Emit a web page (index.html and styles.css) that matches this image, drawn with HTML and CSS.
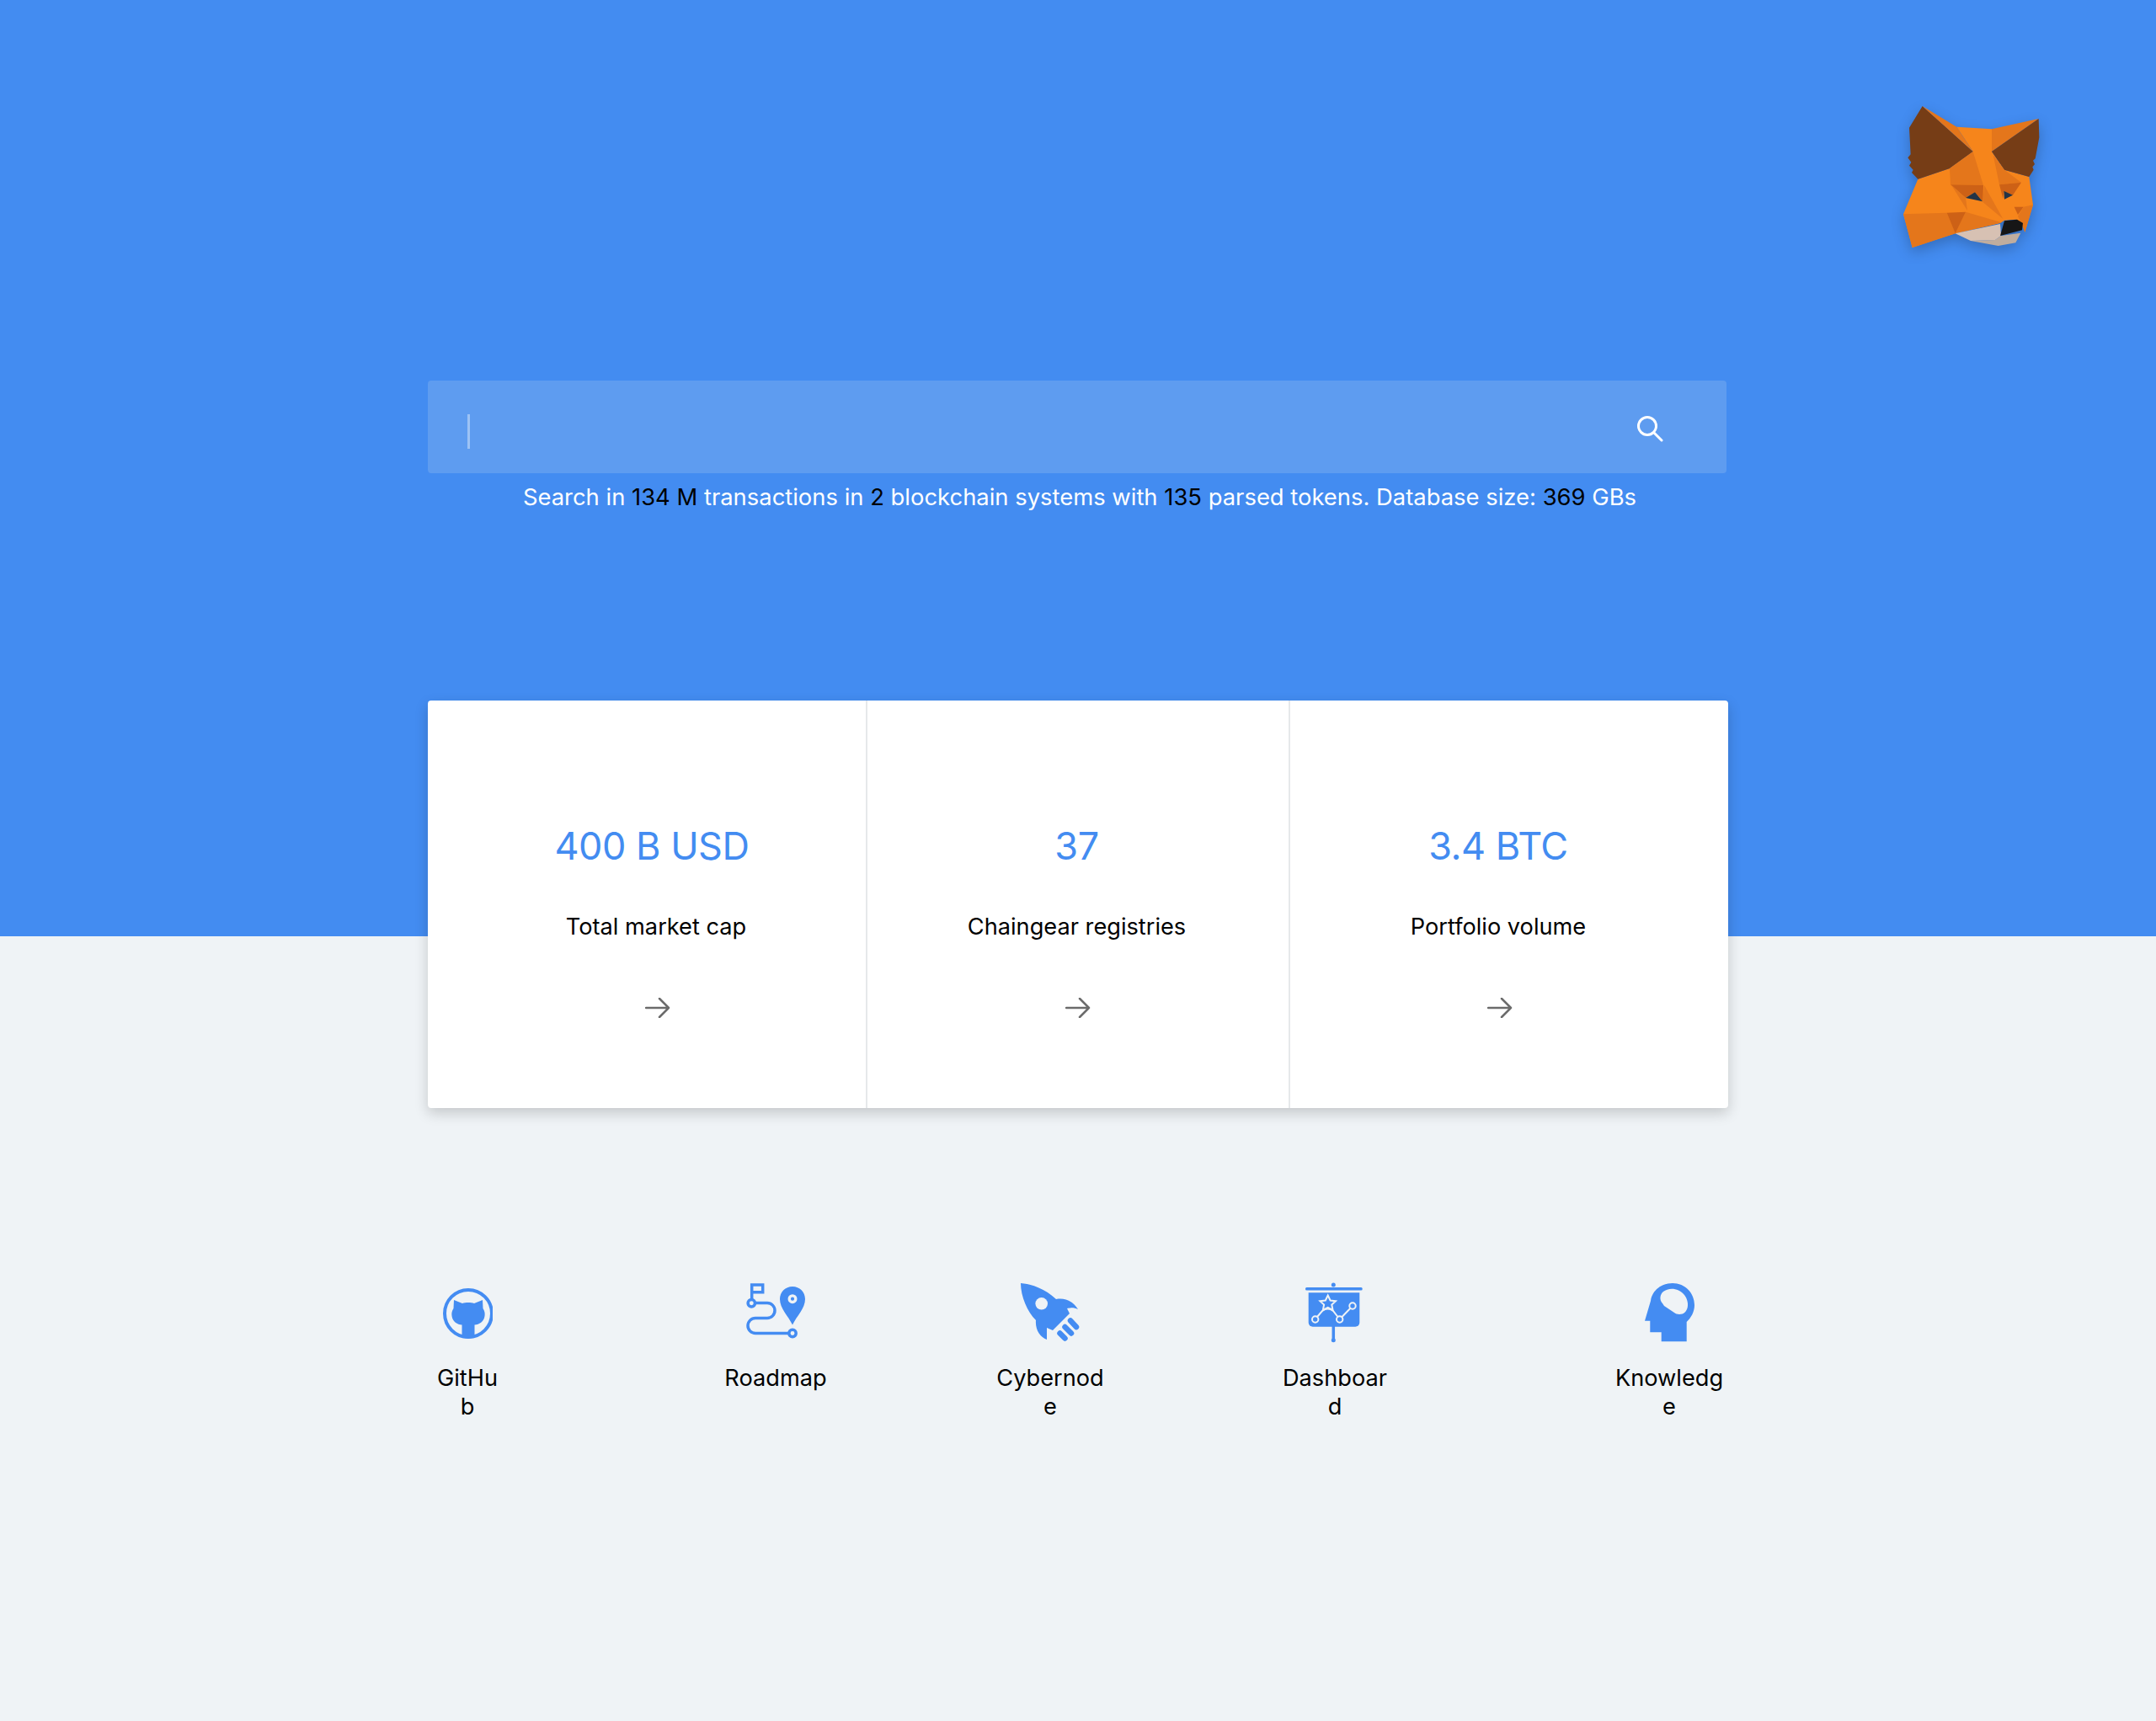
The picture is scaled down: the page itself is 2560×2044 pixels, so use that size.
FILE: index.html
```html
<!DOCTYPE html>
<html lang="en">
<head>
  <meta charset="UTF-8" />
  <meta name="viewport" content="width=device-width, initial-scale=1.0" />
  <title>Cyber Search</title>
  <link rel="stylesheet" href="styles.css">
</head>
<body>
  <section class="hero">
    <div class="hero-top">
      <svg class="fox" viewBox="0 0 720 660">
        <polygon fill="#F6851B" points="172,338 285,300 368,240 310,152 435,160 435,240 480,305 568,330 582,430 553,527 546,495 520,482 480,485 465,495 305,532 152,582 120,463"/>
        <polygon fill="#763D16" points="188,78 368,240 285,300 172,338 150,315 155,305 141,290 148,278 136,262 146,250 141,155"/>
        <polygon fill="#E4761B" points="188,78 310,152 368,240"/>
        <polygon fill="#E4761B" points="435,160 602,123 435,240"/>
        <polygon fill="#763D16" points="602,123 604,190 590,265 582,272 588,285 580,295 584,305 568,330 480,305 435,240"/>
        <polygon fill="#E4761B" points="285,300 368,240 405,360 288,358"/>
        <polygon fill="#E4761B" points="440,252 480,305 540,350 462,358"/>
        <polygon fill="#CD6116" points="288,358 405,360 403,418 375,385 342,405"/>
        <polygon fill="#E4761B" points="290,358 342,405 348,450"/>
        <polygon fill="#E4761B" points="408,360 475,480 403,420"/>
        <polygon fill="#233447" points="375,385 402,418 342,405"/>
        <polygon fill="#CD6116" points="462,358 540,350 510,395 478,380 475,408"/>
        <polygon fill="#233447" points="478,380 510,395 480,410"/>
        <polygon fill="#CD6116" points="515,437 548,437 528,465"/>
        <polygon fill="#E4761B" points="582,430 553,527 528,470 548,437"/>
        <polygon fill="#E4761B" points="342,455 470,493 305,532"/>
        <polygon fill="#E4761B" points="120,463 275,458 305,532 152,582"/>
        <polygon fill="#CD6116" points="275,458 342,455 305,532"/>
        <polygon fill="#C0AD9E" points="447,555 468,540 538,530 520,565 458,576 360,558"/>
        <polygon fill="#D7C1B3" points="305,532 465,498 468,540 447,555 360,558"/>
        <polygon fill="#161616" points="480,487 525,482 546,495 543,520 465,540"/>
      </svg>
    </div>

    <div class="search">
      <span class="search-caret"></span>
      <svg class="search-icon" viewBox="0 0 32 32">
        <circle cx="13" cy="13" r="10.5"/>
        <path d="M21 21 L30 30"/>
      </svg>
    </div>
    <p class="search-hint">Search in <b>134 M</b> transactions in <b>2</b> blockchain systems with <b>135</b> parsed tokens. Database size: <b>369</b> GBs</p>

    <div class="stats">
      <a class="stat stat-first">
        <span class="stat-value stat-value-usd">400 B USD</span>
        <span class="stat-title">Total market cap</span>
        <svg class="stat-arrow" viewBox="0 0 30 24"><path d="M1 12 H28 M17 1 L28 12 L17 23"/></svg>
      </a>
      <a class="stat stat-middle">
        <span class="stat-value">37</span>
        <span class="stat-title">Chaingear registries</span>
        <svg class="stat-arrow" viewBox="0 0 30 24"><path d="M1 12 H28 M17 1 L28 12 L17 23"/></svg>
      </a>
      <a class="stat stat-last">
        <span class="stat-value">3.4 BTC</span>
        <span class="stat-title">Portfolio volume</span>
        <svg class="stat-arrow" viewBox="0 0 30 24"><path d="M1 12 H28 M17 1 L28 12 L17 23"/></svg>
      </a>
    </div>
  </section>

  <nav class="links">
    <a class="link link-github">
      <svg class="link-icon link-icon-small" viewBox="0 0 60 90">
        <circle class="ring" cx="31" cy="50" r="28"/>
        <path class="solid" d="M14 34 L24 38 C28 36.800 34 36.800 38 38 L48 34 L48.500 44 C50.500 47 51 50 50.500 53 C49.500 60 44 63 38.500 63.500 L38.500 78 C34 80 28 80 23.500 78 L23.500 63.500 C18 63 12.500 60 11.500 53 C11 50 11.500 47 13.500 44 Z"/>
      </svg>
      <span class="link-label">GitHub</span>
    </a>
    <a class="link link-roadmap">
      <svg class="link-icon" viewBox="1 0 100 90">
        <path class="line" d="M22.700 33 V16 H35.700 V24.700 H22.700"/>
        <circle class="line" cx="22.300" cy="37.700" r="4.200"/>
        <path class="line" d="M27 37.500 H41 a9 9 0 0 1 0 18 H27 a9 9 0 0 0 0 18 H66"/>
        <circle class="line" cx="71" cy="73.500" r="4.200"/>
        <path class="solid" d="M71 63.500 C66 53 56 44 56 33 C56 24.500 62.500 18 71 18 C79.500 18 86 24.500 86 33 C86 44 76 53 71 63.500 Z"/>
        <circle class="hole-ring" cx="71" cy="32.700" r="3.800"/>
      </svg>
      <span class="link-label">Roadmap</span>
    </a>
    <a class="link link-cybernode">
      <svg class="link-icon" viewBox="-3 0 100 90">
        <path class="solid" d="M12 14 C26 15 41 21 54 33 C64 31 74 35 80 45 C76 43 71 43 67 44 L70 50 L50 70 L43 67 L43 81 C35 78 29 69 30 58 C20 48 12 30 12 14 Z"/>
        <circle class="hole" cx="36.700" cy="38.300" r="7.300"/>
        <path class="bar" d="M71 58.500 L78 66 M64.500 66 L72 73.500 M58.500 73.500 L64.500 79.500"/>
      </svg>
      <span class="link-label">Cybernode</span>
    </a>
    <a class="link link-dashboard">
      <svg class="link-icon" viewBox="-5 0 100 90">
        <circle class="solid" cx="43.300" cy="16" r="2.500"/>
        <rect class="solid" x="10" y="19" width="67.700" height="3.500" rx="1.500"/>
        <path class="solid" d="M13.700 25.300 H74.300 V60.700 A5 5 0 0 1 69.300 65.700 H18.700 A5 5 0 0 1 13.700 60.700 Z"/>
        <path class="line" d="M43.300 65 V81"/>
        <circle class="solid" cx="43.300" cy="81.700" r="2.500"/>
        <circle class="chart" cx="21.700" cy="57" r="3.700"/>
        <circle class="chart" cx="50.700" cy="57" r="3.700"/>
        <circle class="chart" cx="66" cy="41" r="3.700"/>
        <path class="chart" d="M24 54 L30 47 Q36.700 42 43 47 L48.500 54 M53.300 54.300 L63.400 43.700"/>
        <polygon class="chart" points="36.700,28.500 39.600,34.500 46,35.200 41.300,39.600 42.600,46 36.700,42.800 30.800,46 32.100,39.600 27.400,35.200 33.800,34.500"/>
      </svg>
      <span class="link-label">Dashboard</span>
    </a>
    <a class="link link-knowledge">
      <svg class="link-icon" viewBox="1 0 100 90">
        <path class="solid" d="M22 58.700 L29 35 C31 22 42 14 55 14 C70 14 81 26 81 40 C81 48 77 55 71.700 60 V83.300 H41.700 V72.300 H28.300 V58.700 Z"/>
        <path class="hole" d="M43 38 C39 34 40 27 44 24 C50 19 62 19 69 28 C76 37 74 51 63 51 C61 51 58 50 57 49 L45 41 Z"/>
      </svg>
      <span class="link-label">Knowledge</span>
    </a>
  </nav>
</body>
</html>
```

FILE: styles.css
```css
* {
  box-sizing: border-box;
}
body {
  margin: 0;
  min-height: 2044px;
  background-color: #eff3f6;
  font-family: Inter, "Noto Sans", sans-serif;
  color: #000;
}

/* Blue top block, the stats card hangs out of its bottom edge */
.hero {
  height: 1112px;
  padding-top: 100px;
  background-color: #438cf1;
}
.hero-top {
  display: flex;
  justify-content: flex-end;
  padding-right: 100px;
}
.fox {
  width: 240px;
  height: 220px;
  filter: drop-shadow(0 6px 8px rgba(0, 0, 0, 0.22));
}

.search {
  display: flex;
  align-items: center;
  justify-content: space-between;
  width: 1542px;
  height: 110px;
  margin: 132px 0 0 508px;
  padding: 0 75px 0 47px;
  border-radius: 4px;
  background-color: #5e9cf0;
}
.search-caret {
  width: 3px;
  height: 41px;
  margin-top: 11px;
  background-color: #9dc3f5;
}
.search-icon {
  width: 32px;
  height: 32px;
  margin-top: 3px;
  fill: none;
  stroke: #fff;
  stroke-width: 3;
  stroke-linecap: round;
}
.search-hint {
  margin: 10px 0 0;
  padding-left: 4px;
  font-size: 27.4px;
  line-height: 36px;
  text-align: center;
  color: #fff;
}
.search-hint b {
  font-weight: 400;
  color: #000;
}

.stats {
  display: flex;
  width: 1544px;
  height: 484px;
  margin: 224px auto 0;
  border-radius: 4px;
  background-color: #fff;
  box-shadow: 0 6px 16px rgba(0, 0, 0, 0.18);
}
.stat {
  display: flex;
  flex-direction: column;
  align-items: center;
  padding-top: 146px;
}
.stat-first {
  width: 522px;
  padding-left: 22px;
  border-right: 2px solid #e6e8ea;
}
.stat-middle {
  width: 502px;
  padding-right: 3px;
  border-right: 2px solid #e6e8ea;
}
.stat-last {
  width: 520px;
  padding-right: 26px;
}
.stat-value {
  font-size: 45px;
  line-height: 54px;
  letter-spacing: -0.5px;
  color: #438cf1;
}
.stat-value-usd {
  margin-right: 10px;
}
.stat-title {
  margin-top: 51px;
  font-size: 27.2px;
  line-height: 36px;
}
.stat-arrow {
  width: 30px;
  height: 24px;
  margin: 66px 0 0 3px;
  fill: none;
  stroke: #6b6b6b;
  stroke-width: 2.500;
  stroke-linecap: round;
  stroke-linejoin: round;
}

.links {
  display: flex;
  margin: 398px 0 0 508px;
}
.link {
  display: flex;
  flex-direction: column;
  align-items: center;
  padding: 0 10px;
}
.link-icon {
  width: 100px;
  height: 90px;
}
.link-icon-small {
  width: 60px;
}
.link-label {
  width: 100%;
  margin-top: 20px;
  font-size: 27.2px;
  line-height: 34px;
  text-align: center;
  word-break: break-all;
}
.link-github {
  width: 94px;
}
.link-roadmap {
  width: 144px;
  margin-left: 247px;
}
.link-cybernode {
  width: 150px;
  margin-left: 179px;
}
.link-dashboard {
  width: 148px;
  margin-left: 189px;
}
.link-knowledge {
  width: 150px;
  margin-left: 248px;
}

/* Icon parts */
.solid {
  fill: #448cf2;
}
.hole {
  fill: #eff3f6;
}
.hole-ring {
  fill: #448cf2;
  stroke: #eff3f6;
  stroke-width: 3.400;
}
.ring,
.line {
  fill: none;
  stroke: #448cf2;
  stroke-width: 4;
}
.line {
  stroke-width: 3.500;
}
.bar {
  fill: none;
  stroke: #448cf2;
  stroke-width: 6.500;
  stroke-linecap: round;
}
.chart {
  fill: none;
  stroke: #eff3f6;
  stroke-width: 2;
}
```
